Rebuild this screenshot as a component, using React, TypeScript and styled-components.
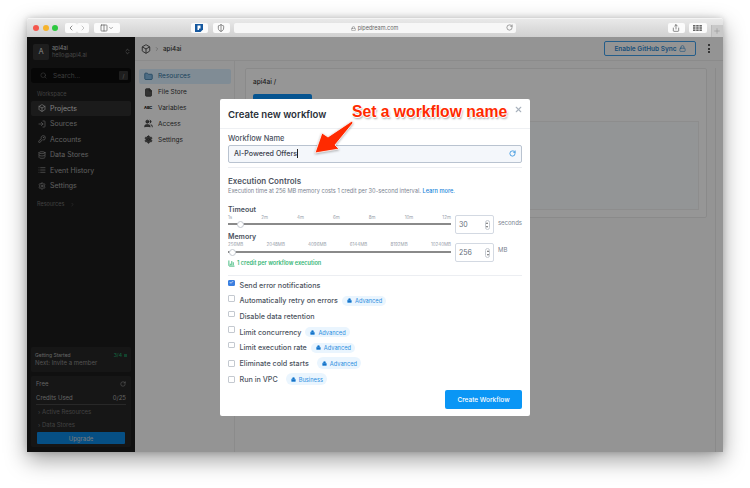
import React from 'react'
import styled, { createGlobalStyle } from 'styled-components'
import {
  BarChart3,
  Box,
  ChevronDown,
  ChevronLeft,
  ChevronRight,
  ChevronsUpDown,
  Columns2,
  Database,
  File,
  Folder,
  KeyRound,
  List,
  Lock,
  LogIn,
  Plus,
  RotateCw,
  Search,
  Settings,
  Share,
  ShieldHalf,
  Users,
  X,
} from 'lucide-react'

const GlobalStyle = createGlobalStyle`
  html, body { margin: 0; padding: 0; background: #fff; overflow: hidden; }
  body { font-family: Inter, "Liberation Sans", sans-serif; }
  * { box-sizing: border-box; }
`

const Page = styled.div`
  width: 750px;
  height: 488px;
  padding: 18px 27px 36px;
`
const BrowserWindow = styled.div`
  position: relative;
  height: 434px;
  display: flex;
  flex-direction: column;
  overflow: hidden;
  border-radius: 3px 3px 0 0;
  background: #fff;
  box-shadow: 0 8px 22px rgba(0, 0, 0, 0.38), 0 0 6px rgba(0, 0, 0, 0.18);
`
const TitleBar = styled.div`
  height: 19px;
  flex: none;
  display: flex;
  align-items: center;
  padding-left: 6px;
  background: linear-gradient(#e9e9e9, #d0d0d0);
  border-top: 1px solid #f4f4f4;
`
const Light = styled.span<{ $color: string }>`
  width: 6px;
  height: 6px;
  margin-right: 3.5px;
  border-radius: 50%;
  background: ${props => props.$color};
`
const ToolButton = styled.div<{ $width: number; $gap?: number; $left?: number }>`
  width: ${props => props.$width}px;
  height: 10px;
  margin-left: ${props => props.$left ?? 0}px;
  margin-right: ${props => props.$gap ?? 4}px;
  display: flex;
  align-items: center;
  justify-content: center;
  border-radius: 2px;
  background: #fbfbfb;
  color: #555;
`
const UrlBar = styled.div`
  position: relative;
  width: 282px;
  height: 10px;
  display: flex;
  align-items: center;
  justify-content: center;
  gap: 2px;
  margin-right: 152px;
  border-radius: 2px;
  background: #f7f7f7;
  font-size: 5.5px;
  color: #666;
`
const UrlReload = styled.span`
  position: absolute;
  right: 3px;
  top: 1px;
  display: flex;
  color: #666;
`
const NewTab = styled.div`
  width: 12px;
  height: 13px;
  margin-top: 6px;
  display: flex;
  align-items: center;
  justify-content: center;
  color: #999;
  background: #c9c9c9;
  border-left: 1px solid #bbb;
`
const Body = styled.div`
  flex: 1;
  display: flex;
  min-height: 0;
  background: #f7f7f7;
`
const Sidebar = styled.aside`
  width: 108px;
  flex: none;
  display: flex;
  flex-direction: column;
  padding: 6px 4px 5px 4px;
  background: #1c1c1c;
  color: #a5a5a5;
`
const Account = styled.div`
  display: flex;
  align-items: center;
  height: 17px;
  margin: 0 0 8px 2px;
  gap: 3px;
`
const AccountTile = styled.div`
  width: 16px;
  height: 16px;
  display: flex;
  align-items: center;
  justify-content: center;
  border-radius: 2px;
  background: #333;
  color: #ddd;
  font-size: 7.5px;
`
const AccountText = styled.div`
  flex: 1;
  font-size: 5.5px;
  line-height: 7px;
  color: #c9c9c9;
  & > small {
    display: block;
    font-size: 5.5px;
    color: #777;
  }
`
const SearchBox = styled.div`
  height: 15px;
  display: flex;
  align-items: center;
  gap: 6px;
  padding: 0 3px 0 9px;
  border-radius: 3px;
  background: #0c0c0c;
  font-size: 6.5px;
  color: #666;
`
const SlashKey = styled.span`
  margin-left: auto;
  width: 9px;
  height: 9px;
  display: flex;
  align-items: center;
  justify-content: center;
  border-radius: 1px;
  background: #333;
  color: #999;
  font-size: 5.5px;
`
const SideLabel = styled.div`
  height: 7px;
  margin: 7px 0 3.5px 6px;
  display: flex;
  align-items: center;
  gap: 6px;
  font-size: 5.5px;
  color: #6c6c6c;
`
const SideItem = styled.div<{ $active?: boolean }>`
  height: 15.5px;
  display: flex;
  align-items: center;
  gap: 4px;
  padding-left: 7px;
  border-radius: 2px;
  font-size: 7px;
  color: ${props => (props.$active ? '#d5d5d5' : '#a0a0a0')};
  background: ${props => (props.$active ? '#2e2e2e' : 'transparent')};
`
const SideSpacer = styled.div`
  flex: 1;
`
const GettingStarted = styled.div`
  margin: 0 0 4px;
  padding: 4px 4px;
  height: 25px;
  border-radius: 2px;
  background: #262626;
  font-size: 5px;
  line-height: 8px;
  color: #aaa;
`
const StartedTop = styled.div`
  display: flex;
  justify-content: space-between;
  align-items: center;
  & > b {
    display: flex;
    align-items: center;
    gap: 2px;
    font-weight: 500;
    color: #1f9d63;
  }
  & > b > i {
    width: 3px;
    height: 3px;
    background: #1f6f4b;
  }
`
const StartedNext = styled.div`
  font-size: 6px;
  color: #8a8a8a;
`
const PlanBox = styled.div`
  height: 71px;
  padding: 1px 5px 3px;
  border-radius: 2px;
  background: #262626;
  font-size: 6px;
  color: #a5a5a5;
`
const PlanRow = styled.div<{ $line?: boolean }>`
  height: 14px;
  display: flex;
  align-items: center;
  justify-content: space-between;
  border-bottom: 1px solid ${props => (props.$line ? '#444' : 'transparent')};
`
const PlanLink = styled.div`
  height: 11.5px;
  margin-top: 1px;
  display: flex;
  align-items: center;
  padding-left: 2px;
  color: #6f6f6f;
`
const UpgradeButton = styled.div`
  height: 12px;
  margin: 2px 1px 0;
  display: flex;
  align-items: center;
  justify-content: center;
  border-radius: 1px;
  background: #0a84dc;
  color: #cfcfcf;
  font-size: 6px;
`
const Content = styled.div`
  flex: 1;
  display: flex;
  flex-direction: column;
  min-width: 0;
`
const Header = styled.div`
  height: 24px;
  flex: none;
  display: flex;
  align-items: center;
  padding: 0 13px 0 6px;
  gap: 3px;
  color: #333;
  font-size: 6.3px;
  font-weight: 500;
  border-bottom: 1px solid #e8e8e8;
`
const GithubButton = styled.div`
  margin-left: auto;
  width: 92px;
  height: 15px;
  display: flex;
  align-items: center;
  justify-content: center;
  gap: 2px;
  border: 1px solid #3d9be6;
  border-radius: 2px;
  color: #2f86cc;
  font-size: 6.5px;
  font-weight: 600;
`
const Kebab = styled.div`
  margin-left: 9px;
  display: flex;
  flex-direction: column;
  gap: 1.5px;
  & > i {
    width: 2px;
    height: 2px;
    border-radius: 50%;
    background: #222;
  }
`
const Panels = styled.div`
  flex: 1;
  display: flex;
  min-height: 0;
`
const ResourceNav = styled.nav`
  width: 100px;
  flex: none;
  padding: 7.5px 3px 0 4px;
  border-right: 1px solid #e8e8e8;
`
const ResourceItem = styled.div<{ $active?: boolean }>`
  height: 15.8px;
  display: flex;
  align-items: center;
  gap: 5px;
  padding-left: 5px;
  border-radius: 2px;
  font-size: 6.5px;
  color: ${props => (props.$active ? '#2c6e99' : '#333')};
  background: ${props => (props.$active ? '#d5e9f8' : 'transparent')};
  & > svg {
    fill: ${props => (props.$active ? '#7fb4dc' : '#555')};
  }
`
const AbcGlyph = styled.span`
  width: 9px;
  flex: none;
  font-size: 4px;
  font-weight: 800;
  letter-spacing: -0.2px;
  color: #222;
`
const MainArea = styled.main`
  flex: 1;
  display: flex;
  padding: 7px 0 0 10px;
  min-width: 0;
`
const MainCard = styled.div`
  width: 462px;
  height: 150px;
  padding: 9px 7px 8px;
  border: 1px solid #e6e6e6;
  border-radius: 2px;
  background: #fbfbfb;
  color: #333;
  font-size: 6.5px;
  font-weight: 500;
`
const NewButton = styled.div`
  width: 59px;
  height: 21px;
  margin-top: 8px;
  border-radius: 2px;
  background: #0a8cf0;
`
const InnerBox = styled.div`
  height: 89px;
  margin-top: 6px;
  border: 1px solid #ececec;
  background: #f6f8fb;
`
const RightStrip = styled.div`
  width: 8px;
  margin-left: auto;
  border-left: 1px solid #e6e6e6;
`
const Overlay = styled.div`
  position: absolute;
  inset: 19px 0 0 0;
  display: flex;
  justify-content: center;
  padding-top: 62px;
  background: rgba(0, 0, 0, 0.4);
`
const Modal = styled.section`
  position: relative;
  width: 310px;
  height: 317px;
  padding: 0 8px;
  border-radius: 2px;
  background: #fff;
  color: #3d4451;
`
const ModalHeader = styled.div`
  height: 30px;
  margin: 0 -8px;
  padding: 1px 8px 0;
  display: flex;
  align-items: center;
  border-bottom: 1px solid #eef0f3;
  font-size: 9.6px;
  font-weight: 600;
  color: #2a2f38;
`
const CloseIcon = styled.span`
  position: absolute;
  right: 7px;
  top: 5.5px;
  display: flex;
  color: #a9b2bd;
`
const FieldLabel = styled.div`
  margin-top: 5px;
  font-size: 7.4px;
  line-height: 10px;
  font-weight: 500;
  color: #4a515e;
`
const NameInput = styled.div`
  height: 18px;
  margin-top: 0.5px;
  padding: 0 5px;
  display: flex;
  align-items: center;
  justify-content: space-between;
  border: 1px solid #b9c3d0;
  border-radius: 2px;
  background: #f4f7fb;
  font-size: 7.1px;
  font-weight: 500;
  color: #39404c;
  & > span {
    border-right: 1px solid #222;
    padding-right: 0.5px;
  }
  & > svg {
    color: #1a86da;
  }
`
const Divider = styled.div<{ $top: number }>`
  height: 1px;
  margin-top: ${props => props.$top}px;
  background: #eceef2;
`
const SectionTitle = styled.div`
  margin-top: 8.5px;
  font-size: 8px;
  line-height: 10px;
  font-weight: 600;
  color: #4f5663;
`
const SectionHint = styled.div`
  margin-top: 0.5px;
  font-size: 5.67px;
  line-height: 9px;
  color: #7b8390;
  & > a {
    color: #1a86da;
    font-weight: 500;
  }
`
const ControlRow = styled.div<{ $top: number }>`
  margin-top: ${props => props.$top}px;
  display: flex;
  align-items: flex-start;
`
const SliderBlock = styled.div`
  width: 223px;
`
const SliderTitle = styled.div`
  font-size: 7px;
  line-height: 9px;
  font-weight: 600;
  color: #4a515e;
`
const Marks = styled.div`
  display: flex;
  justify-content: space-between;
  height: 8px;
  font-size: 4.5px;
  line-height: 8px;
  color: #98a0aa;
`
const Track = styled.div<{ $top: number }>`
  position: relative;
  height: 2px;
  margin-top: ${props => props.$top}px;
  background: #8a8a8a;
`
const Thumb = styled.span<{ $left: number }>`
  position: absolute;
  top: -2.5px;
  left: ${props => props.$left}px;
  width: 7px;
  height: 7px;
  border: 1px solid #c3c8cf;
  border-radius: 50%;
  background: #fff;
`
const NumberBox = styled.div<{ $top: number }>`
  width: 39px;
  height: 19px;
  margin: ${props => props.$top}px 0 0 4px;
  padding: 0 3px 0 3px;
  display: flex;
  align-items: center;
  justify-content: space-between;
  border: 1px solid #d3d9e2;
  border-radius: 2px;
  font-size: 7px;
  color: #666d79;
`
const Stepper = styled.span`
  width: 5px;
  height: 10px;
  border: 1px solid #c5cad1;
  border-radius: 3px;
  position: relative;
  &::before, &::after {
    content: '';
    position: absolute;
    left: 0.5px;
    border-left: 1.5px solid transparent;
    border-right: 1.5px solid transparent;
  }
  &::before { top: 1px; border-bottom: 2px solid #666; }
  &::after { bottom: 1px; border-top: 2px solid #666; }
`
const Unit = styled.span<{ $top: number }>`
  margin: ${props => props.$top}px 0 0 4px;
  font-size: 6px;
  color: #7b8390;
`
const CreditLine = styled.div`
  margin-top: 6px;
  display: flex;
  align-items: center;
  gap: 2px;
  font-size: 5.6px;
  line-height: 8px;
  font-weight: 600;
  color: #34b574;
`
const CheckList = styled.div`
  margin-top: 1.5px;
`
const CheckRow = styled.div<{ $height?: number }>`
  height: ${props => props.$height ?? 15.6}px;
  display: flex;
  align-items: center;
  font-size: 7.2px;
  font-weight: 500;
  color: #4c5360;
`
const CheckBox = styled.span<{ $checked?: boolean; $raised?: boolean }>`
  width: 6.5px;
  height: 6.5px;
  flex: none;
  margin-right: 5px;
  position: relative;
  top: ${props => (props.$raised ? -2.5 : 0)}px;
  display: flex;
  align-items: center;
  justify-content: center;
  border: 1px solid ${props => (props.$checked ? '#3b7fe0' : '#c4c9d0')};
  border-radius: 1px;
  background: ${props => (props.$checked ? '#3b7fe0' : '#fff')};
  color: #fff;
  font-size: 5px;
  line-height: 1;
`
const PlanBadge = styled.span<{ $large?: boolean }>`
  height: ${props => (props.$large ? 12 : 10)}px;
  margin-left: ${props => (props.$large ? 8 : 4)}px;
  padding: 0 4px 0 5px;
  display: flex;
  align-items: center;
  gap: 3px;
  border-radius: 6px;
  background: #eaf5fe;
  color: #2d8ee0;
  font-size: 5.7px;
  font-weight: 400;
  & > svg {
    fill: #1a6fc0;
  }
`
const CreateButton = styled.div`
  width: 77px;
  height: 19px;
  margin: 3px 0 0 auto;
  display: flex;
  align-items: center;
  justify-content: center;
  border-radius: 2px;
  background: #0a96f5;
  color: #fff;
  font-size: 6.5px;
  font-weight: 500;
`
const CalloutText = styled.div`
  position: absolute;
  left: 325px;
  top: 84px;
  font-family: "Liberation Sans", Arial, sans-serif;
  font-size: 15.7px;
  line-height: 20px;
  font-weight: 700;
  color: #ff2a00;
  white-space: nowrap;
  text-shadow: -1px 0 #fff, 1px 0 #fff, 0 -1px #fff, 0 1px #fff, 1px 2px 2px rgba(0, 0, 0, 0.35);
`
const CalloutArrow = styled.svg`
  position: absolute;
  left: 285px;
  top: 102px;
  filter: drop-shadow(0 1px 1px rgba(0, 0, 0, 0.3));
`

const sideItems = [
  { label: 'Projects', icon: Box, active: true },
  { label: 'Sources', icon: LogIn },
  { label: 'Accounts', icon: KeyRound },
  { label: 'Data Stores', icon: Database },
  { label: 'Event History', icon: List },
  { label: 'Settings', icon: Settings },
]
const resourceItems = [
  { label: 'Resources', icon: Folder, active: true },
  { label: 'File Store', icon: File },
  { label: 'Variables' },
  { label: 'Access', icon: Users },
  { label: 'Settings', icon: Settings },
]
const timeoutMarks = ['1s', '2m', '4m', '6m', '8m', '10m', '12m']
const memoryMarks = ['256MB', '2048MB', '4096MB', '6144MB', '8192MB', '10240MB']
const options = [
  { label: 'Send error notifications', checked: true, raised: true },
  { label: 'Automatically retry on errors', plan: 'Advanced', raised: true },
  { label: 'Disable data retention', raised: true },
  { label: 'Limit concurrency', plan: 'Advanced', raised: true },
  { label: 'Limit execution rate', plan: 'Advanced', raised: true },
  { label: 'Eliminate cold starts', plan: 'Advanced', large: true },
  { label: 'Run in VPC', plan: 'Business', large: true },
]

const App: React.FC = () => {
  return (
    <Page>
      <GlobalStyle />
      <BrowserWindow>
        <TitleBar>
          <Light $color="#f4574d" />
          <Light $color="#f6b32c" />
          <Light $color="#2ec840" />
          <ToolButton $width={12} $gap={0} $left={3}><ChevronLeft size={8} /></ToolButton>
          <ToolButton $width={12} $gap={5}><ChevronRight size={8} color="#aaa" /></ToolButton>
          <ToolButton $width={26} $gap={71}><Columns2 size={8} /><ChevronDown size={6} /></ToolButton>
          <ToolButton $width={17} $gap={5}>
            <svg width="8" height="8" viewBox="0 0 8 8">
              <path d="M0 0H8V5.5L5.5 8H0Z" fill="#15589f" />
              <path d="M2.5 1.5H5.5V4.5H4V6H2.5Z" fill="#fff" />
            </svg>
          </ToolButton>
          <ToolButton $width={17} $gap={4}><ShieldHalf size={8} /></ToolButton>
          <UrlBar>
            <Lock size={5} /> pipedream.com
            <UrlReload><RotateCw size={7} /></UrlReload>
          </UrlBar>
          <ToolButton $width={17} $gap={4}><Share size={8} /></ToolButton>
          <ToolButton $width={18} $gap={4}>
            <svg width="9" height="6" viewBox="0 0 9 6" fill="#666">
              <rect width="2.5" height="1.6" /><rect x="3.2" width="2.5" height="1.6" /><rect x="6.4" width="2.5" height="1.6" />
              <rect y="2.2" width="2.5" height="1.6" /><rect x="3.2" y="2.2" width="2.5" height="1.6" /><rect x="6.4" y="2.2" width="2.5" height="1.6" />
              <rect y="4.4" width="2.5" height="1.6" /><rect x="3.2" y="4.4" width="2.5" height="1.6" /><rect x="6.4" y="4.4" width="2.5" height="1.6" />
            </svg>
          </ToolButton>
          <NewTab><Plus size={8} /></NewTab>
        </TitleBar>
        <Body>
          <Sidebar>
            <Account>
              <AccountTile>A</AccountTile>
              <AccountText>api4ai<small>hello@api4.ai</small></AccountText>
              <ChevronsUpDown size={7} />
            </Account>
            <SearchBox><Search size={7} />Search...<SlashKey>/</SlashKey></SearchBox>
            <SideLabel>Workspace</SideLabel>
            {sideItems.map(({ label, icon: Icon, active }) => (
              <SideItem key={label} $active={active}><Icon size={8} />{label}</SideItem>
            ))}
            <SideLabel>Resources <ChevronRight size={5} /></SideLabel>
            <SideSpacer />
            <GettingStarted>
              <StartedTop>Getting Started<b>3/4 <i /></b></StartedTop>
              <StartedNext>Next: Invite a member</StartedNext>
            </GettingStarted>
            <PlanBox>
              <PlanRow>Free <RotateCw size={6} /></PlanRow>
              <PlanRow $line>Credits Used <span>0/25</span></PlanRow>
              <PlanLink>› Active Resources</PlanLink>
              <PlanLink>› Data Stores</PlanLink>
              <UpgradeButton>Upgrade</UpgradeButton>
            </PlanBox>
          </Sidebar>
          <Content>
            <Header>
              <Box size={10} />
              <ChevronRight size={6} color="#888" />
              <span>api4ai</span>
              <GithubButton>Enable GitHub Sync <Lock size={7} /></GithubButton>
              <Kebab><i /><i /><i /></Kebab>
            </Header>
            <Panels>
              <ResourceNav>
                {resourceItems.map(({ label, icon: Icon, active }) => (
                  <ResourceItem key={label} $active={active}>
                    {Icon ? <Icon size={9} /> : <AbcGlyph>ABC</AbcGlyph>}
                    {label}
                  </ResourceItem>
                ))}
              </ResourceNav>
              <MainArea>
                <MainCard>
                  api4ai /
                  <NewButton />
                  <InnerBox />
                </MainCard>
                <RightStrip />
              </MainArea>
            </Panels>
          </Content>
        </Body>
        <Overlay>
          <Modal>
            <ModalHeader>Create new workflow</ModalHeader>
            <CloseIcon><X size={9} strokeWidth={3} /></CloseIcon>
            <FieldLabel>Workflow Name</FieldLabel>
            <NameInput><span>AI-Powered Offers</span><RotateCw size={7} strokeWidth={2.5} /></NameInput>
            <Divider $top={4} />
            <SectionTitle>Execution Controls</SectionTitle>
            <SectionHint>Execution time at 256 MB memory costs 1 credit per 30-second interval. <a>Learn more.</a></SectionHint>
            <ControlRow $top={9}>
              <SliderBlock>
                <SliderTitle>Timeout</SliderTitle>
                <Marks>{timeoutMarks.map(m => <span key={m}>{m}</span>)}</Marks>
                <Track $top={1.5}><Thumb $left={9} /></Track>
              </SliderBlock>
              <NumberBox $top={10.5}>30<Stepper /></NumberBox>
              <Unit $top={14.5}>seconds</Unit>
            </ControlRow>
            <ControlRow $top={-2.5}>
              <SliderBlock>
                <SliderTitle>Memory</SliderTitle>
                <Marks>{memoryMarks.map(m => <span key={m}>{m}</span>)}</Marks>
                <Track $top={2.5}><Thumb $left={1} /></Track>
                <CreditLine><BarChart3 size={7} strokeWidth={3} />1 credit per workflow execution</CreditLine>
              </SliderBlock>
              <NumberBox $top={11.5}>256<Stepper /></NumberBox>
              <Unit $top={14.5}>MB</Unit>
            </ControlRow>
            <Divider $top={8} />
            <CheckList>
              {options.map(({ label, checked, plan, large, raised }) => (
                <CheckRow key={label} $height={large ? 16 : undefined}>
                  <CheckBox $checked={checked} $raised={raised}>{checked ? '✓' : ''}</CheckBox>
                  {label}
                  {plan && <PlanBadge $large={large}><Lock size={5} strokeWidth={3} />{plan}</PlanBadge>}
                </CheckRow>
              ))}
            </CheckList>
            <CreateButton>Create Workflow</CreateButton>
          </Modal>
        </Overlay>
        <CalloutArrow width="50" height="40" viewBox="0 0 50 40">
          <polygon points="3,33 10,13 16,17 40,1 41,3 23,25 27,29" fill="#ff2a00" stroke="#fff" strokeWidth="0.8" />
        </CalloutArrow>
        <CalloutText>Set a workflow name</CalloutText>
      </BrowserWindow>
    </Page>
  )
}

export default App
